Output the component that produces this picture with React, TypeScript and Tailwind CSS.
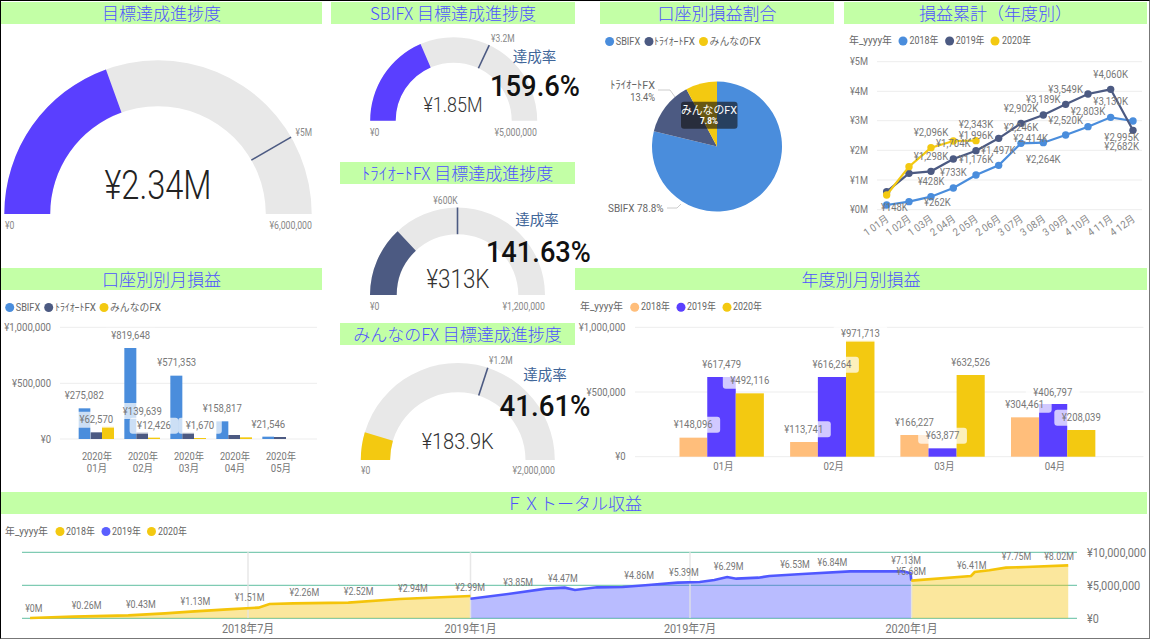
import React from "react";

type Pt = [number, number];
const BLUE = "#4A8DDC", NAVY = "#4C5A82", YEL = "#F3C911", PUR = "#5A3FFF", PEACH = "#FFBE7B", TRACK = "#E8E8E8", GREY = "#777777";

function est(t: string, s: number) {
  let em = 0;
  for (const ch of t) {
    const c = ch.codePointAt(0) as number;
    if (c >= 0xff61 && c <= 0xff9f) em += 0.5;
    else if (c > 0x2e80) em += 1;
    else if (ch === "," || ch === "." || ch === " " || ch === "I") em += 0.25;
    else if (ch === "%") em += 0.7;
    else if (ch === "M") em += 0.7;
    else if (ch === "K") em += 0.55;
    else if (/[A-Z]/.test(ch)) em += 0.55;
    else em += 0.47;
  }
  return em * s;
}

function T({ x, y, t, a = "middle", s = 11, c = GREY, w, weight }: { x: number; y: number; t: string; a?: "start" | "middle" | "end"; s?: number; c?: string; w?: number; weight?: number }) {
  return (
    <text x={x} y={y} textAnchor={a} dominantBaseline="central" fontSize={s} fill={c} fontWeight={weight} textLength={w ?? est(t, s)} lengthAdjust="spacingAndGlyphs">
      {t}
    </text>
  );
}

function L({ x, y, t, s = 11, bg = false }: { x: number; y: number; t: string; s?: number; bg?: boolean }) {
  const wd = est(t, s) + 15;
  return (
    <g>
      {bg && <rect x={x - wd / 2} y={y - 8} width={wd} height={16} rx={3} fill="#fff" fillOpacity={0.72} />}
      <T x={x} y={y} t={t} s={s} />
    </g>
  );
}

function Chart({ x, y, w, h, children }: { x: number; y: number; w: number; h: number; children: React.ReactNode }) {
  return (
    <svg viewBox={`${x} ${y} ${w} ${h}`} width={w} height={h} className="block overflow-visible">
      {children}
    </svg>
  );
}

function Title({ children, className = "" }: { children: React.ReactNode; className?: string }) {
  return (
    <div className={`h-[22px] bg-[#C3FFA6] text-center text-[17px] leading-[22px] font-light text-[#4F52FF] whitespace-nowrap font-['Noto_Sans_CJK_JP',sans-serif] ${className}`}>
      {children}
    </div>
  );
}

function arc(cx: number, cy: number, R: number, r: number, from: number, to: number) {
  const p = (rad: number, f: number): Pt => [cx - rad * Math.cos(f * Math.PI), cy - rad * Math.sin(f * Math.PI)];
  const [a, b] = p(R, from);
  const [c, d] = p(R, to);
  const [e, g] = p(r, to);
  const [h, i] = p(r, from);
  return `M${a} ${b}A${R} ${R} 0 0 1 ${c} ${d}L${e} ${g}A${r} ${r} 0 0 0 ${h} ${i}Z`;
}

function Gauge({ cx, cy, R, r, f, target, color }: { cx: number; cy: number; R: number; r: number; f: number; target: number; color: string }) {
  const cs = Math.cos(target * Math.PI), sn = Math.sin(target * Math.PI);
  return (
    <g>
      <path d={arc(cx, cy, R, r, 0, 1)} fill={TRACK} />
      <path d={arc(cx, cy, R, r, 0, f)} fill={color} />
      <line x1={cx - r * cs} y1={cy - r * sn} x2={cx - R * cs} y2={cy - R * sn} stroke={NAVY} strokeWidth={1.6} />
    </g>
  );
}

function Legend({ y, items, head }: { y: number; head?: [string, number, number]; items: [string, number, number, string][] }) {
  return (
    <g>
      {head && <T x={head[1]} y={y} t={head[0]} a="start" s={10} c="#666" w={head[2]} />}
      {items.map(([t, cxx, tx, col]) => (
        <g key={t + cxx}>
          <circle cx={cxx} cy={y + 0.5} r={4.5} fill={col} />
          <T x={tx} y={y} t={t} a="start" s={10} c="#666" />
        </g>
      ))}
    </g>
  );
}

const Z8 = (x: number, y: number): Pt => [850 + x / 3, 60 + y / 3];
const Z3 = (x: number, y: number): Pt => [x / 3, 260 + y / 3];
const Z4 = (x: number, y: number): Pt => [570 + x / 2.703, 260 + y / 3];
const Z5 = (x: number, y: number): Pt => [x / 2.727, 490 + y / 3];
const Z6 = (x: number, y: number): Pt => [575 + x / 2.727, 490 + y / 3];

const lineX = [110, 177, 243, 310, 378, 446, 513, 580, 647, 714, 782, 849];
const blueY = [435, 425, 410, 384, 345, 316, 250, 248, 225, 200, 172, 183];
const navyY = [395, 340, 334, 297, 272, 235, 190, 165, 133, 102, 88, 211];
const yelY = [405, 320, 263, 243, 242];
const months = ["1 01月", "1 02月", "1 03月", "2 04月", "2 05月", "2 06月", "3 07月", "3 08月", "3 09月", "4 10月", "4 11月", "4 12月"];
const lineLabels: [string, number, number][] = [
  ["¥148K", 133, 442], ["¥262K", 262, 428], ["¥428K", 243, 365], ["¥733K", 310, 337], ["¥1,176K", 378, 298], ["¥1,497K", 445, 272],
  ["¥2,264K", 580, 298], ["¥2,414K", 542, 235], ["¥2,520K", 647, 180], ["¥2,803K", 714, 155], ["¥3,130K", 782, 125], ["¥2,995K", 815, 232],
  ["¥1,298K", 243, 288], ["¥1,704K", 310, 250], ["¥1,996K", 378, 226], ["¥2,246K", 513, 203], ["¥2,902K", 513, 146], ["¥3,189K", 580, 118],
  ["¥3,549K", 647, 88], ["¥4,060K", 782, 43], ["¥2,682K", 815, 260], ["¥2,096K", 243, 218], ["¥2,343K", 378, 193],
];

function Series({ ys, color }: { ys: number[]; color: string }) {
  const pts = ys.map((y, i) => Z8(lineX[i], y));
  return (
    <g>
      <polyline points={pts.map((p) => p.join(",")).join(" ")} fill="none" stroke={color} strokeWidth={2.2} />
      {pts.map((p, i) => <circle key={i} cx={p[0]} cy={p[1]} r={3.7} fill={color} />)}
    </g>
  );
}

const leftBars: [number, number, number, string][] = [
  [236, 271, 445, BLUE], [272, 306, 517, NAVY], [306, 342, 500, YEL],
  [373, 409, 264, BLUE], [409, 444, 517, NAVY], [444, 480, 533, YEL],
  [511, 547, 347, BLUE], [547, 582, 518, NAVY], [582, 618, 534, YEL],
  [649, 685, 484, BLUE], [685, 720, 525, NAVY], [720, 756, 532, YEL],
  [787, 822, 530, BLUE], [822, 858, 531, NAVY],
];
const leftLabels: [string, number, number][] = [
  ["¥275,082", 253, 407], ["¥819,648", 392, 227], ["¥571,353", 530, 308], ["¥158,817", 667, 445], ["¥21,546", 805, 494],
  ["¥62,570", 289, 479], ["¥139,639", 427, 453], ["¥12,426", 462, 497], ["¥1,670", 600, 497],
];
const rightBars: [number, number, number, string][] = [
  [296, 371, 533, PEACH], [371, 448, 351, PUR], [448, 524, 400, YEL],
  [595, 670, 546, PEACH], [670, 746, 351, PUR], [746, 823, 242, YEL],
  [893, 969, 525, PEACH], [969, 1045, 565, PUR], [1045, 1121, 345, YEL],
  [1192, 1268, 472, PEACH], [1268, 1344, 432, PUR], [1344, 1420, 510, YEL],
];
const rightLabels: [string, number, number][] = [
  ["¥148,096", 333, 494], ["¥617,479", 410, 314], ["¥492,116", 486, 362], ["¥113,741", 632, 508], ["¥616,264", 708, 314], ["¥971,713", 785, 221],
  ["¥166,227", 931, 488], ["¥63,877", 1007, 527], ["¥632,526", 1083, 308], ["¥304,461", 1229, 434], ["¥406,797", 1305, 396], ["¥208,039", 1382, 473],
];

const y18: Pt[] = ([[82, 384], [200, 380], [350, 376], [450, 370], [520, 365], [620, 358], [705, 353], [735, 342], [800, 340], [950, 338], [1090, 327], [1283, 318]] as Pt[]).map(([a, b]) => Z5(a, b));
const b19: Pt[] = [
  ...([[1283, 326], [1400, 310], [1490, 296], [1540, 293]] as Pt[]).map(([a, b]) => Z5(a, b)),
  ...([[0, 300], [60, 292], [130, 291], [200, 285], [280, 278], [340, 276], [380, 270], [415, 261], [440, 266], [500, 263], [530, 258], [620, 252], [750, 244], [895, 244], [915, 250], [917, 272]] as Pt[]).map(([a, b]) => Z6(a, b)),
];
const y20: Pt[] = ([[917, 272], [1080, 258], [1090, 246], [1130, 241], [1175, 233], [1230, 231], [1345, 226]] as Pt[]).map(([a, b]) => Z6(a, b));
const base = 618.3;
const area = (p: Pt[]) => `M${p[0][0]} ${base}` + p.map((q) => `L${q[0]} ${q[1]}`).join("") + `L${p[p.length - 1][0]} ${base}Z`;
const pl = (p: Pt[]) => p.map((q) => q.join(",")).join(" ");
const fxLabels: [string, Pt][] = [
  ["¥0M", Z5(92, 354)], ["¥0.26M", Z5(236, 347)], ["¥0.43M", Z5(384, 344)], ["¥1.13M", Z5(533, 333)], ["¥1.51M", Z5(681, 323)], ["¥2.26M", Z5(830, 308)],
  ["¥2.52M", Z5(978, 305)], ["¥2.94M", Z5(1126, 296)], ["¥2.99M", Z5(1282, 293)], ["¥3.85M", Z5(1413, 278)], ["¥4.47M", Z5(1535, 265)],
  ["¥4.86M", Z6(175, 256)], ["¥5.39M", Z6(297, 248)], ["¥6.29M", Z6(419, 229)], ["¥6.53M", Z6(600, 224)], ["¥6.84M", Z6(702, 218)], ["¥7.13M", Z6(903, 212)],
  ["¥5.68M", Z6(917, 243)], ["¥6.41M", Z6(1082, 227)], ["¥7.75M", Z6(1204, 200)], ["¥8.02M", Z6(1320, 200)],
];

function pieSlice(cx: number, cy: number, R: number, a: number, b: number) {
  const p = (f: number): Pt => [cx + R * Math.sin(f * 2 * Math.PI), cy - R * Math.cos(f * 2 * Math.PI)];
  const [x1, y1] = p(a);
  const [x2, y2] = p(b);
  return `M${cx} ${cy}L${x1} ${y1}A${R} ${R} 0 ${b - a > 0.5 ? 1 : 0} 1 ${x2} ${y2}Z`;
}

export default function App() {
  return (
    <div className="w-[1150px] h-[639px] overflow-hidden bg-white border-l border-t border-l-black border-t-black border-r border-b border-r-[#777] border-b-[#777] pt-px font-['Roboto','Noto_Sans_CJK_JP',sans-serif]">
      <div className="flex h-[489px]">
        {/* left column */}
        <div className="w-[321px] shrink-0">
          <Title>目標達成進捗度</Title>
          <Chart x={1} y={24} w={321} h={244}>
            <Gauge cx={158} cy={214} R={153.7} r={107.8} f={0.39} target={5 / 6} color={PUR} />
            <T x={5} y={225} t="¥0" a="start" s={10} c="#888" />
            <T x={312} y={225} t="¥6,000,000" a="end" s={10} c="#888" />
            <T x={312} y={132} t="¥5M" a="end" s={10} c="#888" />
            <T x={158} y={185} t="¥2.34M" s={40} c="#222" w={107} weight={300} />
          </Chart>
          <Title>口座別別月損益</Title>
          <Chart x={1} y={290} w={321} h={199}>
            <Legend y={307} items={[["SBIFX", 9.7, 15.7, BLUE], ["ﾄﾗｲｵｰﾄFX", 48.7, 55, NAVY], ["みんなのFX", 104, 110, YEL]]} />
            {[327.3, 383.3, 439].map((y) => <line key={y} x1={60} x2={317} y1={y} y2={y} stroke="#EDEDED" />)}
            <T x={51} y={327.3} t="¥1,000,000" a="end" />
            <T x={51} y={383.3} t="¥500,000" a="end" />
            <T x={51} y={439} t="¥0" a="end" />
            {leftBars.map(([a, b, top, col]) => {
              const [x, y] = Z3(a, top);
              return <rect key={a} x={x} y={y} width={(b - a) / 3} height={439 - y} fill={col} />;
            })}
            {leftLabels.map(([t, a, b]) => {
              const [x, y] = Z3(a, b);
              return <L key={t} x={x} y={y} t={t} bg />;
            })}
            {[97, 143, 189, 235, 281].map((x, i) => (
              <g key={x}>
                <T x={x} y={456.7} t="2020年" s={10.5} />
                <T x={x} y={468} t={`0${i + 1}月`} s={10.5} />
              </g>
            ))}
          </Chart>
        </div>

        {/* middle column */}
        <div className="w-[244px] shrink-0 ml-[9px]">
          <Title>SBIFX 目標達成進捗度</Title>
          <Chart x={331} y={24} w={244} h={138}>
            <Gauge cx={453.7} cy={120.7} R={83.5} r={58} f={0.37} target={0.64} color={PUR} />
            <T x={491} y={38} t="¥3.2M" a="start" s={10} c="#888" />
            <T x={370} y={132} t="¥0" a="start" s={10} c="#888" />
            <T x={537} y={132} t="¥5,000,000" a="end" s={10} c="#888" />
            <T x={453} y={105} t="¥1.85M" s={21} c="#333" w={59} weight={300} />
            <T x={534.6} y={57} t="達成率" s={14.5} c="#3F6699" />
            <T x={535} y={85.7} t="159.6%" s={30} c="#111" w={90} weight={500} />
          </Chart>
          <Title className="ml-[9px]">ﾄﾗｲｵｰﾄFX 目標達成進捗度</Title>
          <Chart x={331} y={184} w={244} h={139}>
            <Gauge cx={457.5} cy={295} R={87.5} r={60.8} f={0.26} target={0.5} color={NAVY} />
            <T x={445.5} y={200} t="¥600K" s={10} c="#888" />
            <T x={370} y={306} t="¥0" a="start" s={10} c="#888" />
            <T x={545} y={306} t="¥1,200,000" a="end" s={10} c="#888" />
            <T x={458} y={279} t="¥313K" s={25} c="#333" w={63} weight={300} />
            <T x={537} y={220} t="達成率" s={14.5} c="#3F6699" />
            <T x={538.4} y={251.7} t="141.63%" s={30} c="#111" w={105} weight={500} />
          </Chart>
          <Title className="ml-[9px]">みんなのFX 目標達成進捗度</Title>
          <Chart x={331} y={345} w={244} h={144}>
            <Gauge cx={457.8} cy={460} R={97} r={67.7} f={0.092} target={0.6} color={YEL} />
            <T x={489} y={360} t="¥1.2M" a="start" s={10} c="#888" />
            <T x={361} y={470.7} t="¥0" a="start" s={10} c="#888" />
            <T x={555} y={470.7} t="¥2,000,000" a="end" s={10} c="#888" />
            <T x={457.7} y={441.7} t="¥183.9K" s={22} c="#333" w={72} weight={300} />
            <T x={545} y={375} t="達成率" s={14.5} c="#3F6699" />
            <T x={545} y={405} t="41.61%" s={30} c="#111" w={91} weight={500} />
          </Chart>
        </div>

        {/* right column */}
        <div className="w-[572px] shrink-0">
          <div className="flex h-[266px] pl-[25px] gap-[10px]">
            <div className="w-[234px] shrink-0">
              <Title>口座別損益割合</Title>
              <Chart x={600} y={24} w={234} h={244}>
                <Legend y={41} items={[["SBIFX", 609.6, 615.7, BLUE], ["ﾄﾗｲｵｰﾄFX", 649, 654, NAVY], ["みんなのFX", 703.5, 709.6, YEL]]} />
                <path d={pieSlice(717, 146.5, 65, 0, 0.788)} fill={BLUE} />
                <path d={pieSlice(717, 146.5, 65, 0.788, 0.922)} fill={NAVY} />
                <path d={pieSlice(717, 146.5, 65, 0.922, 1)} fill={YEL} />
                <rect x={681} y={101.7} width={56.5} height={27} rx={3} fill="#111" fillOpacity={0.62} />
                <T x={709} y={110.5} t="みんなのFX" s={11} c="#fff" />
                <T x={709} y={120.5} t="7.8%" s={9.5} c="#fff" weight={700} />
                <T x={655} y={85.5} t="ﾄﾗｲｵｰﾄFX" a="end" s={11} c="#666" />
                <T x={655} y={97.5} t="13.4%" a="end" s={10.5} c="#666" />
                <polyline points="658,90 670,90 675,97" fill="none" stroke="#CCC" />
                <T x={608} y={208.5} t="SBIFX 78.8%" a="start" s={11} c="#666" />
                <polyline points="667,208 677,208 681,204" fill="none" stroke="#CCC" />
              </Chart>
            </div>
            <div className="w-[303px] shrink-0">
              <Title>損益累計（年度別）</Title>
              <Chart x={844} y={24} w={303} h={244}>
                <Legend y={40.5} head={["年_yyyy年", 849, 43]} items={[["2018年", 903, 909.6, BLUE], ["2019年", 949.6, 955.7, NAVY], ["2020年", 995, 1002, YEL]]} />
                {[61.7, 91.3, 120.7, 150.3, 180, 209.7].map((y, i) => (
                  <g key={y}>
                    <line x1={877} x2={1142} y1={y} y2={y} stroke="#EDEDED" />
                    <T x={868} y={y} t={`¥${5 - i}M`} a="end" />
                  </g>
                ))}
                <Series ys={blueY} color={BLUE} />
                <Series ys={navyY} color={NAVY} />
                <Series ys={yelY} color={YEL} />
                {lineLabels.map(([t, a, b]) => {
                  const [x, y] = Z8(a, b);
                  return <L key={t} x={x} y={y} t={t} />;
                })}
                {months.map((m, i) => {
                  const [x, y] = Z8(lineX[i] - 5, 462);
                  return (
                    <text key={m} x={x} y={y} textAnchor="end" dominantBaseline="hanging" fontSize={10.5} fill="#888" textLength={est(m, 10.5)} lengthAdjust="spacingAndGlyphs" transform={`rotate(-35 ${x} ${y})`}>
                      {m}
                    </text>
                  );
                })}
              </Chart>
            </div>
          </div>
          <Title className="w-[572px]">年度別月別損益</Title>
          <Chart x={575} y={290} w={572} h={199}>
            <Legend y={306.7} head={["年_yyyy年", 580, 43]} items={[["2018年", 634.7, 641, PEACH], ["2019年", 681, 687, PUR], ["2020年", 727, 733, YEL]]} />
            {[327.3, 392, 456.7].map((y) => <line key={y} x1={635} x2={1143.5} y1={y} y2={y} stroke="#EDEDED" />)}
            <T x={625.5} y={327.3} t="¥1,000,000" a="end" />
            <T x={625.5} y={392} t="¥500,000" a="end" />
            <T x={625.5} y={456.7} t="¥0" a="end" />
            {rightBars.map(([a, b, top, col]) => {
              const [x, y] = Z4(a, top);
              return <rect key={a} x={x} y={y} width={(b - a) / 2.703} height={456.7 - y} fill={col} />;
            })}
            {rightLabels.map(([t, a, b]) => {
              const [x, y] = Z4(a, b);
              return <L key={t} x={x} y={y} t={t} bg />;
            })}
            {["01月", "02月", "03月", "04月"].map((m, i) => (
              <T key={m} x={Z4([415, 713, 1012, 1311][i], 0)[0]} y={466.7} t={m} s={10.5} />
            ))}
          </Chart>
        </div>
      </div>

      {/* bottom */}
      <Title className="mt-px w-[1146px]">ＦＸトータル収益</Title>
      <Chart x={1} y={514} w={1147} h={124}>
        <Legend y={531} head={["年_yyyy年", 5, 43]} items={[["2018年", 60, 66, YEL], ["2019年", 106, 112, "#5A5FFF"], ["2020年", 151.5, 158, YEL]]} />
        {[552.3, 585.3, 618.3].map((y) => <line key={y} x1={22} x2={1077} y1={y} y2={y} stroke="#5FBFA0" />)}
        <path d={area(y18)} fill="#F4C40A" fillOpacity={0.4} />
        <path d={area(b19)} fill="#5058FF" fillOpacity={0.4} />
        <path d={area(y20)} fill="#F4C40A" fillOpacity={0.4} />
        {[248, 470.5, 690, 911.6].map((x) => <line key={x} x1={x} x2={x} y1={552} y2={618} stroke="#E3E3E3" strokeOpacity={0.85} strokeWidth={1.5} />)}
        <polyline points={pl(y18)} fill="none" stroke="#F4C40A" strokeWidth={2.6} />
        <polyline points={pl(b19)} fill="none" stroke="#5058FF" strokeWidth={2.6} />
        <polyline points={pl(y20)} fill="none" stroke="#F4C40A" strokeWidth={2.6} />
        {fxLabels.map(([t, [x, y]]) => <T key={t} x={x} y={y} t={t} s={10.5} />)}
        <T x={1087} y={552} t="¥10,000,000" a="start" s={12.5} />
        <T x={1087} y={585} t="¥5,000,000" a="start" s={12.5} />
        <T x={1087} y={618} t="¥0" a="start" s={12.5} />
        {([[248, "2018年7月"], [470.5, "2019年1月"], [690, "2019年7月"], [911.6, "2020年1月"]] as [number, string][]).map(([x, t]) => (
          <T key={t} x={x} y={629} t={t} s={12} />
        ))}
      </Chart>
    </div>
  );
}
